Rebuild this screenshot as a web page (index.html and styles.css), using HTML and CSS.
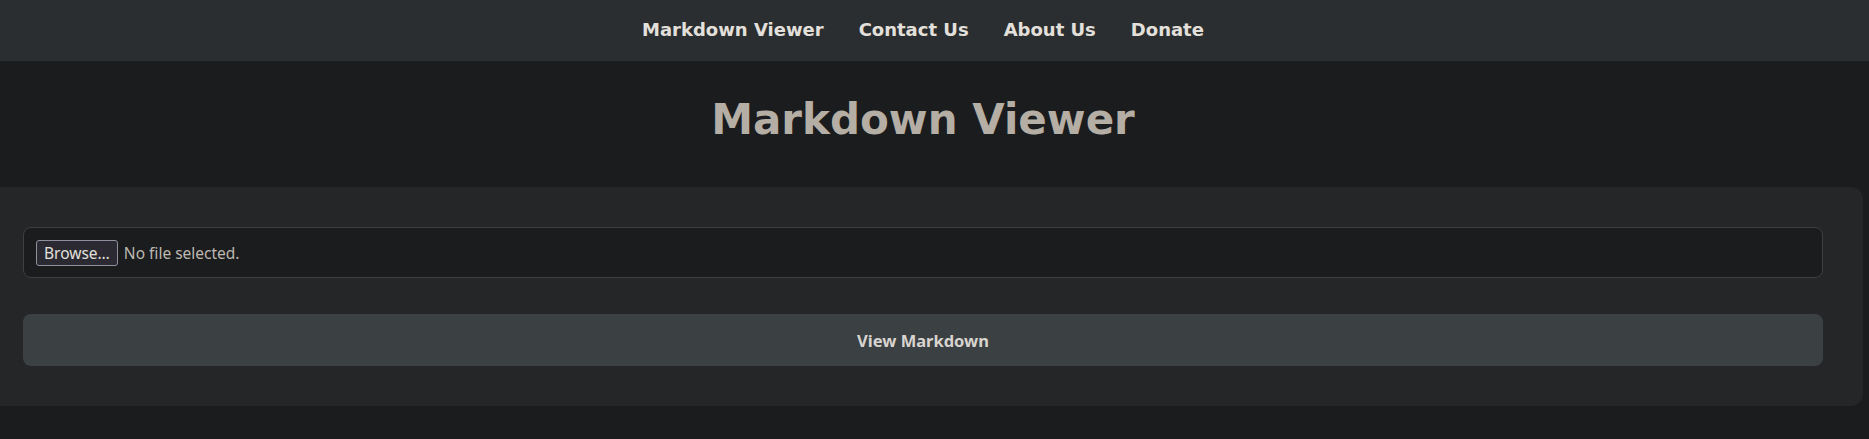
FILE: index.html
```html
<!DOCTYPE html>
<html lang="en">
<head>
<meta charset="utf-8">
<title>Markdown Viewer</title>
<link rel="stylesheet" href="styles.css">
</head>
<body>
<nav class="topnav">
  <a class="nav-link" href="#">Markdown Viewer</a>
  <a class="nav-link" href="#">Contact Us</a>
  <a class="nav-link" href="#">About Us</a>
  <a class="nav-link" href="#">Donate</a>
</nav>
<main class="page">
  <h1 class="title">Markdown Viewer</h1>
  <section class="panel">
    <label class="file-field">
      <span class="browse-btn">Browse…</span>
      <span class="file-status">No file selected.</span>
    </label>
    <button class="view-btn" type="button">View Markdown</button>
  </section>
</main>
</body>
</html>
```
FILE: styles.css
```css
html, body {
  margin: 0;
  padding: 0;
}
body {
  background: #1b1c1e;
  color: #e3e0db;
  font-family: "DejaVu Sans", sans-serif;
  overflow-x: hidden;
}
.topnav {
  box-sizing: border-box;
  height: 61px;
  background: #2b2e31;
  display: flex;
  align-items: center;
  justify-content: center;
  gap: 35px;
  padding-right: 23px;
  padding-bottom: 2px;
}
.nav-link {
  color: #e3e0db;
  text-decoration: none;
  font-weight: bold;
  font-size: 18px;
  line-height: 21px;
}
.page {
  padding-right: 23px;
  display: flex;
  flex-direction: column;
  align-items: center;
}
.title {
  margin: 34px 0 43px;
  font-size: 42px;
  line-height: 49px;
  font-weight: bold;
  color: #b4aea5;
  text-align: center;
}
.panel {
  box-sizing: border-box;
  width: calc(100% + 34px);
  flex-shrink: 0;
  background: #242628;
  border-radius: 12px;
  padding: 40px;
  display: flex;
  flex-direction: column;
  gap: 36px;
}
.file-field {
  box-sizing: border-box;
  height: 51px;
  display: flex;
  align-items: center;
  gap: 6px;
  padding: 0 12px;
  background: #1b1c1e;
  border: 1px solid #3d4043;
  border-radius: 8px;
  font-family: "Noto Sans", sans-serif;
  font-size: 15.5px;
}
.browse-btn {
  box-sizing: border-box;
  height: 26px;
  display: flex;
  align-items: center;
  padding: 0 7px;
  background: #2b2a33;
  border: 1px solid #8f8f9d;
  border-radius: 3px;
  color: #e3e0db;
}
.file-status {
  color: #bdb8b0;
}
.view-btn {
  height: 52px;
  border: none;
  border-radius: 8px;
  background: #3b4043;
  color: #d8d4cf;
  font-family: "Noto Sans", sans-serif;
  font-weight: bold;
  font-size: 16.5px;
  cursor: pointer;
}
```
